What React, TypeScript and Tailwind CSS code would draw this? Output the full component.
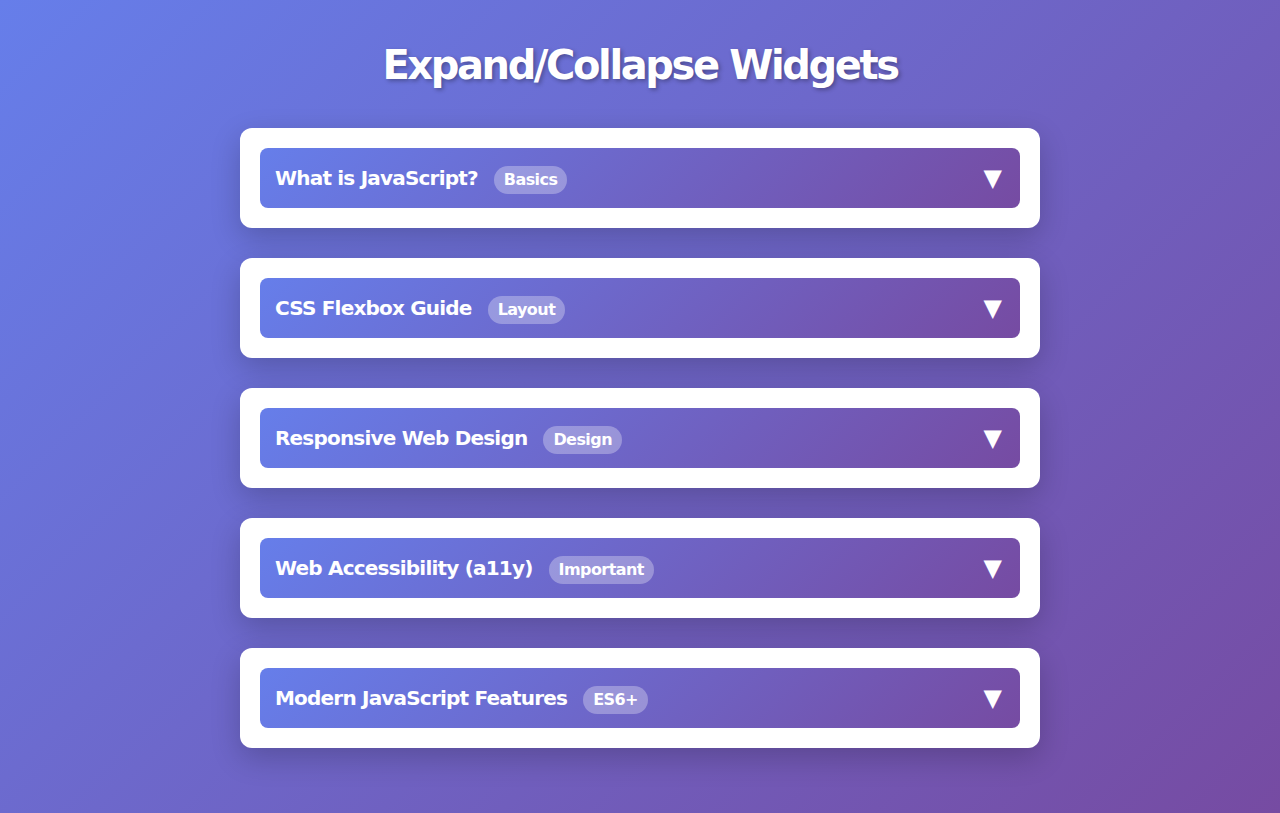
import { useState } from 'react';

const items = [
  { title: 'What is JavaScript?', tag: 'Basics', body: 'JavaScript is a programming language that makes web pages interactive.' },
  { title: 'CSS Flexbox Guide', tag: 'Layout', body: 'Flexbox is a one-dimensional layout method for arranging items in rows or columns.' },
  { title: 'Responsive Web Design', tag: 'Design', body: 'Responsive design makes web pages render well on a variety of devices and screen sizes.' },
  { title: 'Web Accessibility (a11y)', tag: 'Important', body: 'Accessibility means making websites usable by as many people as possible.' },
  { title: 'Modern JavaScript Features', tag: 'ES6+', body: 'Arrow functions, destructuring, modules, promises and async/await.' },
];

export default function App() {
  const [open, setOpen] = useState<number | null>(null);

  return (
    <div
      className="min-h-screen w-full bg-[linear-gradient(135deg,#667eea_0%,#764ba2_100%)] px-5 pt-[41px] pb-10"
      style={{ fontFamily: '"DejaVu Sans", sans-serif' }}
    >
      <h1 className="text-center text-[40px] leading-[48px] font-bold tracking-[-0.06em] text-white [text-shadow:2px_2px_4px_rgba(0,0,0,0.3)] mb-[39px]">
        Expand/Collapse Widgets
      </h1>

      <div className="mx-auto flex w-[800px] flex-col gap-[30px]">
        {items.map((item, i) => (
          <div key={i} className="rounded-xl bg-white p-5 shadow-[0_10px_30px_rgba(0,0,0,0.2)]">
            <button
              onClick={() => setOpen(open === i ? null : i)}
              className="flex h-[60px] w-full items-center rounded-lg bg-[linear-gradient(135deg,#667eea_0%,#764ba2_100%)] pl-[15px] pr-[18px] text-left text-white"
            >
              <span className="text-[20px] font-bold tracking-[-0.04em]">{item.title}</span>
              <span className="ml-4 mt-[3px] rounded-full bg-white/30 px-[10px] py-[2px] text-[16px] font-bold tracking-[-0.035em]">
                {item.tag}
              </span>
              <span className={`ml-auto text-[24px] leading-none transition-transform ${open === i ? 'rotate-180' : ''}`}>▼</span>
            </button>
            {open === i && (
              <div className="px-[15px] pt-4 text-[16px] text-gray-700">{item.body}</div>
            )}
          </div>
        ))}
      </div>
    </div>
  );
}
